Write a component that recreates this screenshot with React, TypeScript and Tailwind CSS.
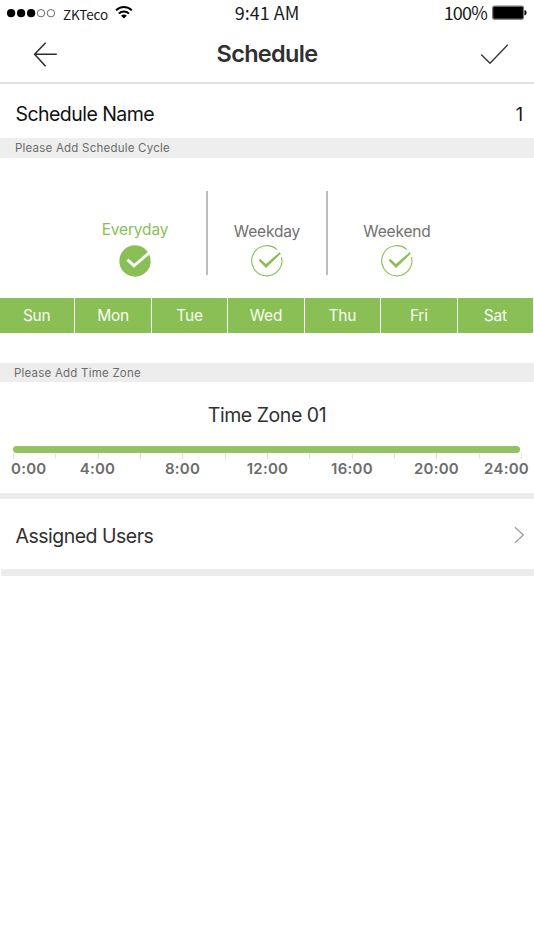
import React from 'react';

const DAYS = ['Sun', 'Mon', 'Tue', 'Wed', 'Thu', 'Fri', 'Sat'];

const HOURS = [
    { label: '0:00', className: 'w-[44px]' },
    { label: '4:00', className: 'w-[85px] text-center' },
    { label: '8:00', className: 'w-[85px] text-center' },
    { label: '12:00', className: 'w-[85px] text-center' },
    { label: '16:00', className: 'w-[84px] text-center' },
    { label: '20:00', className: 'w-[85px] text-center' },
    { label: '24:00', className: 'flex-1 text-right' },
];

function StatusBar(): React.ReactElement {
    return (
        <div className="grid grid-cols-3 h-[28px] pl-[7px] pr-[7px] text-[#1a1a1a] font-['Noto_Sans_CJK_SC','Noto_Sans',sans-serif] whitespace-nowrap">
            <div className="flex items-start">
                <svg width="50" height="10" viewBox="0 0 50 10" className="mt-[8px] shrink-0">
                    <circle cx="4.1" cy="5.2" r="4.1" fill="#000" />
                    <circle cx="14.1" cy="5.2" r="4.1" fill="#000" />
                    <circle cx="24.1" cy="5.2" r="4.1" fill="#000" />
                    <circle cx="34" cy="5.2" r="3.7" fill="none" stroke="#444" strokeWidth="0.8" />
                    <circle cx="43.9" cy="5.2" r="3.7" fill="none" stroke="#444" strokeWidth="0.8" />
                </svg>
                <span className="ml-[6px] mt-[5px] text-[13.5px] leading-[18px] tracking-[-0.15px]">ZKTeco</span>
                <svg width="18" height="14" viewBox="0 0 18 14" className="ml-[7px] mt-[5px] shrink-0" fill="none" stroke="#000" strokeWidth="2">
                    <path d="M1 5.4C5.4 0.9 12.4 0.9 16.8 5.4" />
                    <path d="M3.8 8.6C6.7 5.7 11.1 5.7 14 8.6" />
                    <path d="M8.9 13.5L6 10.7C7.7 9.2 10.1 9.2 11.8 10.7Z" fill="#000" stroke="none" />
                </svg>
            </div>
            <div className="text-center text-[18px] leading-[24px]">9:41 AM</div>
            <div className="flex items-start justify-end">
                <span className="text-[18px] leading-[25px] tracking-[-0.8px]">100%</span>
                <svg width="35" height="15" viewBox="0 0 35 15" className="ml-[5px] mt-[5px] shrink-0">
                    <rect x="0.7" y="1.2" width="30.8" height="13" rx="1.8" fill="#000" stroke="#777" strokeWidth="1.2" />
                    <path d="M32.8 5.5H33.2C34.5 6 34.5 9.6 33.2 10.1H32.8Z" fill="#000" stroke="#000" strokeWidth="0.6" />
                </svg>
            </div>
        </div>
    );
}

function Header(): React.ReactElement {
    return (
        <div className="flex items-center justify-between h-[56px] border-b-2 border-[#e2e2e2] pl-[33px] pr-[25px] pb-[2px]">
            <button type="button" aria-label="Back">
                <svg width="25" height="26" viewBox="0 0 25 26" fill="none" stroke="#2c2c2c" strokeWidth="1.5">
                    <path d="M12.6 1.7L1.6 13.2L12.6 25.2M1.6 13.2H23.8" />
                </svg>
            </button>
            <h1 className="text-[23.5px] leading-[28px] font-semibold tracking-[-0.7px] text-[#303033] -mt-px pr-[4px]">Schedule</h1>
            <button type="button" aria-label="Save">
                <svg width="29" height="22" viewBox="0 0 29 22" fill="none" stroke="#333" strokeWidth="1.3">
                    <path d="M1.2 11.5L10 20.3L27.8 1.8" />
                </svg>
            </button>
        </div>
    );
}

function CheckCircle({ filled }: { filled?: boolean }): React.ReactElement {
    if (filled) {
        return (
            <svg width="34" height="32" viewBox="0 0 34 32">
                <circle cx="17" cy="16" r="15.7" fill="#8abf55" />
                <path d="M9.4 14.6L16 20.8L30.8 8.2" fill="none" stroke="#fff" strokeWidth="3" />
            </svg>
        );
    }
    return (
        <svg width="34" height="32" viewBox="0 0 34 32" fill="none">
            <path d="M27 4.6A15.1 15.1 0 1 0 31.5 12.2" stroke="#8abf55" strokeWidth="1.1" />
            <path d="M10.2 13.8L15.9 19L29.8 7L30.8 8.7L16 22.9L8.6 15.4Z" fill="#8abf55" />
        </svg>
    );
}

export default function App(): React.ReactElement {
    return (
        <div className="w-[534px] h-[950px] bg-white overflow-hidden font-['Inter',sans-serif]">
            <StatusBar />
            <Header />
            <div className="flex items-center justify-between h-[54px] pl-[15.5px] pr-[11px] pt-[7px] text-[19.5px] text-[#111]">
                <span className="tracking-[-0.55px]">Schedule Name</span>
                <span className="text-[18px]">1</span>
            </div>
            <div className="h-[20px] bg-[#eeeeee] pl-[15px] text-[11.5px] leading-[20px] tracking-[0.22px] text-[#6c6c6c]">
                Please Add Schedule Cycle
            </div>

            <div className="flex h-[140px] pt-[33px] text-[15.5px] tracking-[-0.15px] text-[#707070]">
                <div className="w-[208px] h-[84px] border-r-2 border-[#bdbdbd] pl-[64px] flex flex-col items-center pt-[29px] text-[#8abf55]">
                    <span className="leading-[20px]">Everyday</span>
                    <div className="mt-[5px]"><CheckCircle filled /></div>
                </div>
                <div className="w-[120px] h-[84px] border-r-2 border-[#bdbdbd] flex flex-col items-center pt-[31px]">
                    <span className="leading-[20px]">Weekday</span>
                    <div className="mt-[3px]"><CheckCircle /></div>
                </div>
                <div className="w-[138px] h-[84px] flex flex-col items-center pt-[31px]">
                    <span className="leading-[20px]">Weekend</span>
                    <div className="mt-[3px]"><CheckCircle /></div>
                </div>
            </div>

            <div className="grid grid-cols-7 -ml-px w-[535px] h-[35px]">
                {DAYS.map((day) => (
                    <div key={day} className="bg-[#8abf55] border-r border-white text-center text-[15.5px] tracking-[-0.2px] leading-[35px] text-[#f8fbf4]">
                        {day}
                    </div>
                ))}
            </div>

            <div className="mt-[30px] h-[19px] bg-[#ededed] pl-[14px] text-[11.5px] leading-[20px] tracking-[0.22px] text-[#6c6c6c]">
                Please Add Time Zone
            </div>
            <div className="h-[111px]">
                <h2 className="pt-[20px] text-center text-[19.5px] leading-[26px] tracking-[-0.45px] text-[#303030]">Time Zone 01</h2>
                <div className="mt-[18px] ml-[13px] w-[507px] h-[7px] rounded-full bg-[#91c263]" />
                <div className="ml-[13px] w-[509px] flex justify-between h-[6px]">
                    {Array.from({ length: 13 }, (_, i) => (
                        <span key={i} className="w-px bg-[#e4e4e4]" />
                    ))}
                </div>
                <div className="flex pl-[11px] pr-[5px] text-[15px] leading-[19px] font-semibold tracking-[0.25px] text-[#6c6c6c]">
                    {HOURS.map((h) => (
                        <span key={h.label} className={h.className}>
                            {h.label}
                        </span>
                    ))}
                </div>
            </div>

            <div className="h-[6px] bg-[#ececec]" />
            <div className="flex items-center justify-between h-[70px] pl-[15.5px] pr-[9px] pt-[2px] text-[19.5px] text-[#303030]">
                <span className="pt-[4px] tracking-[-0.5px]">Assigned Users</span>
                <svg width="12" height="18" viewBox="0 0 12 18" fill="none" stroke="#999" strokeWidth="1.2">
                    <path d="M2 1.3L10.3 9L2 16.7" />
                </svg>
            </div>
            <div className="h-[7px] ml-px bg-[#ececec]" />
        </div>
    );
}
